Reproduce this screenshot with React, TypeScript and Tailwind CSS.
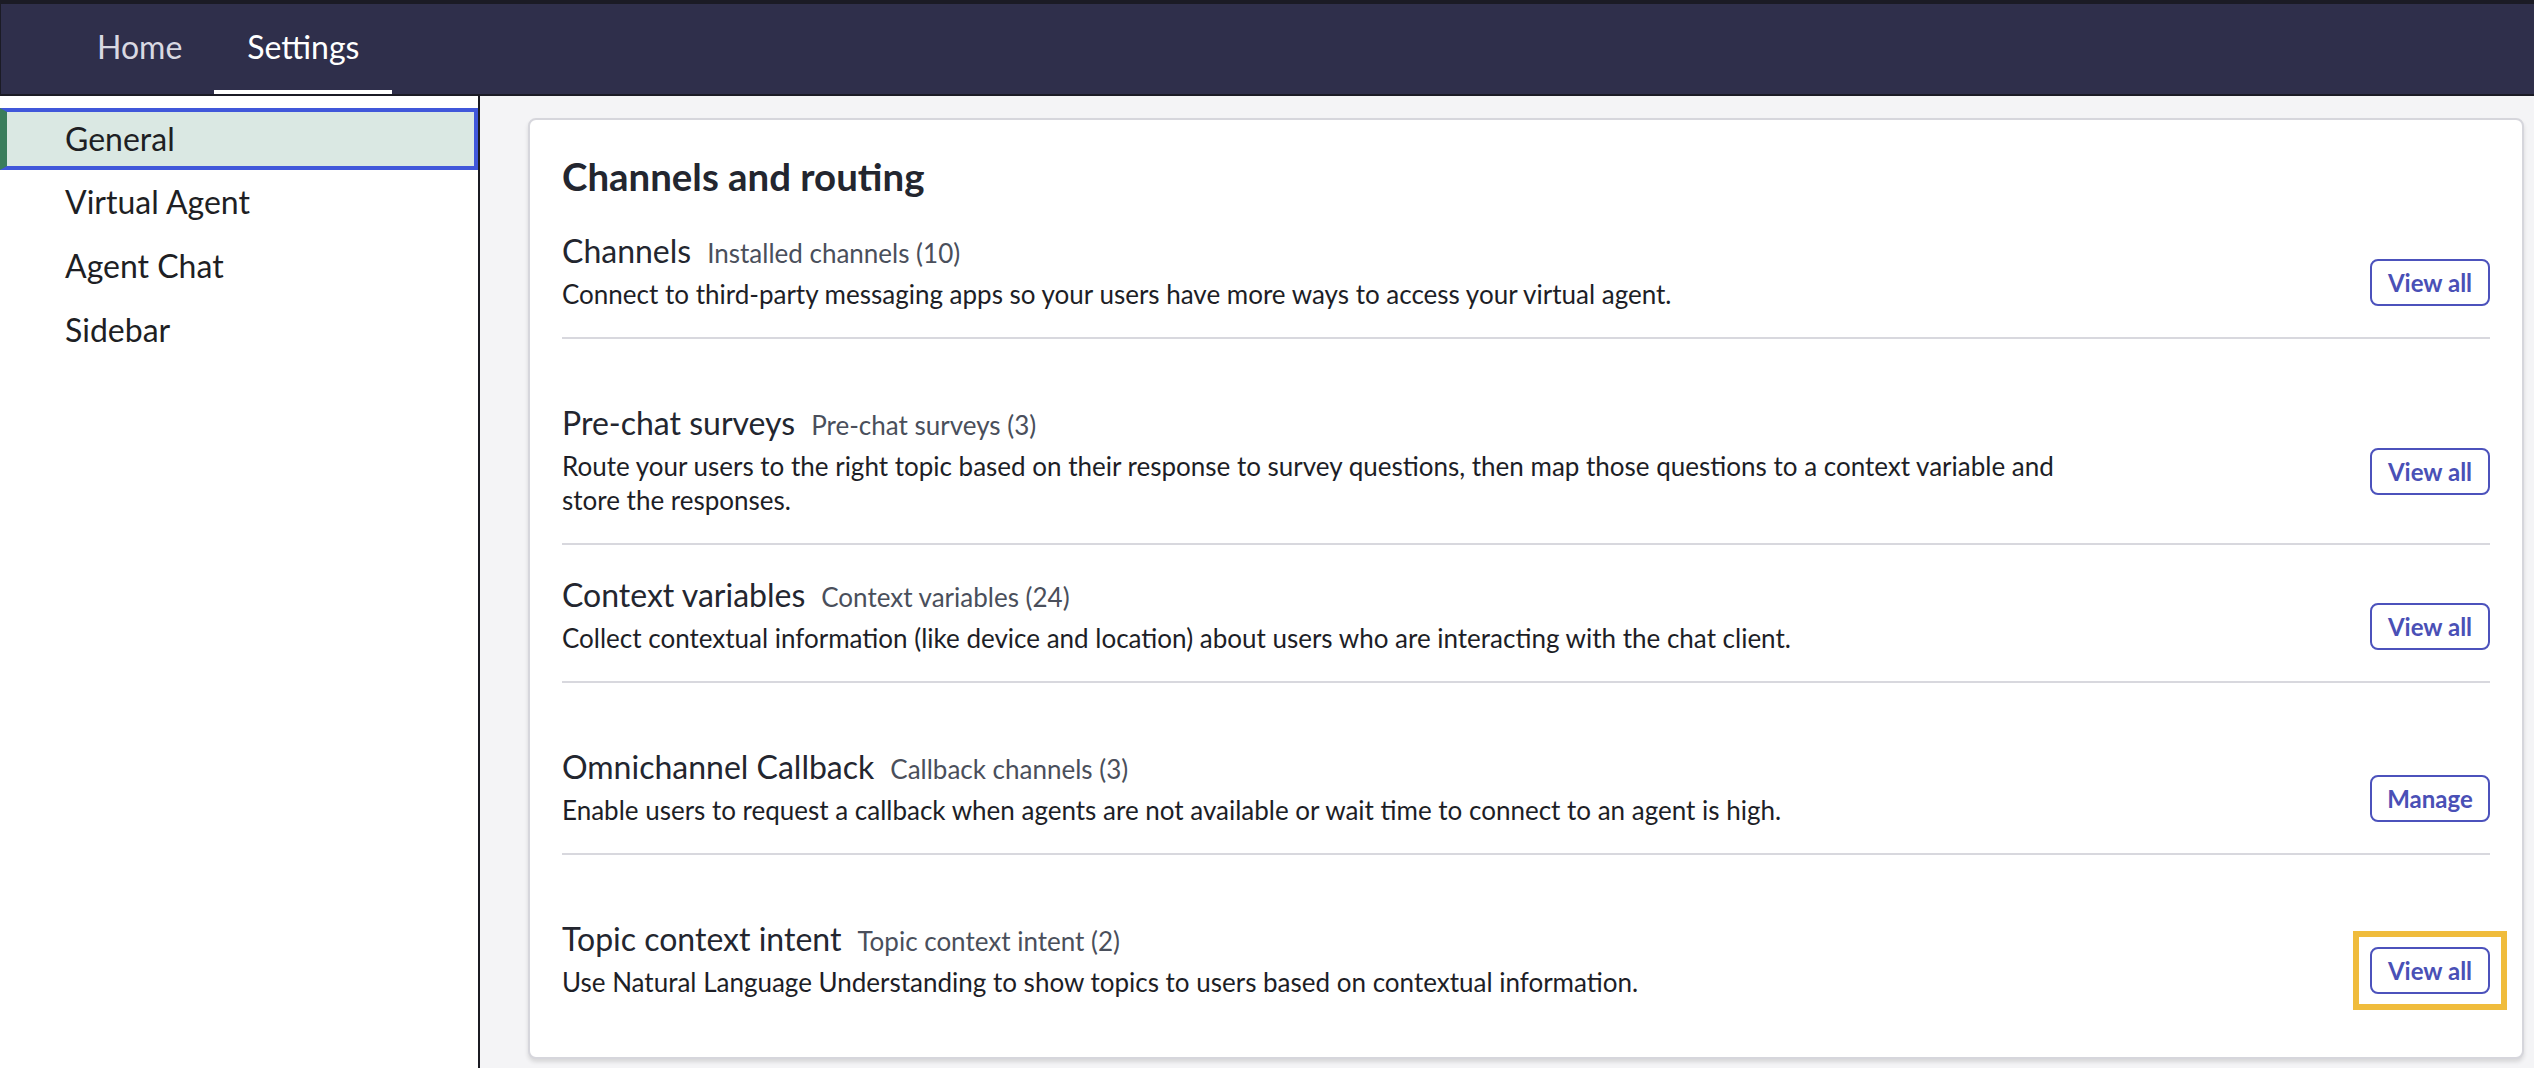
import React from "react";

type Section = {
  title: string;
  meta: string;
  desc: string;
  action: string;
  pad: string;
  focused?: boolean;
  last?: boolean;
};

const sections: Section[] = [
  {
    title: "Channels",
    meta: "Installed channels (10)",
    desc: "Connect to third-party messaging apps so your users have more ways to access your virtual agent.",
    action: "View all",
    pad: "pt-[19px]",
  },
  {
    title: "Pre-chat surveys",
    meta: "Pre-chat surveys (3)",
    desc: "Route your users to the right topic based on their response to survey questions, then map those questions to a context variable and store the responses.",
    action: "View all",
    pad: "pt-[60px]",
  },
  {
    title: "Context variables",
    meta: "Context variables (24)",
    desc: "Collect contextual information (like device and location) about users who are interacting with the chat client.",
    action: "View all",
    pad: "pt-[26px]",
  },
  {
    title: "Omnichannel Callback",
    meta: "Callback channels (3)",
    desc: "Enable users to request a callback when agents are not available or wait time to connect to an agent is high.",
    action: "Manage",
    pad: "pt-[60px]",
  },
  {
    title: "Topic context intent",
    meta: "Topic context intent (2)",
    desc: "Use Natural Language Understanding to show topics to users based on contextual information.",
    action: "View all",
    pad: "pt-[60px]",
    focused: true,
    last: true,
  },
];

const sideItems = ["General", "Virtual Agent", "Agent Chat", "Sidebar"];

function ActionButton({ label, focused }: { label: string; focused?: boolean }) {
  return (
    <div className="relative mt-[27px] shrink-0">
      <button className="h-[47px] w-[120px] rounded-[8px] border-2 border-[#4c52bc] bg-white text-[24px] font-bold text-[#4a50b6]">
        {label}
      </button>
      {/* keyboard focus frame */}
      {focused && (
        <span className="pointer-events-none absolute -inset-x-[17px] -inset-y-[16px] border-[6px] border-[#f0bc3c]" />
      )}
    </div>
  );
}

export default function App() {
  return (
    <div className="flex h-[1068px] w-full flex-col overflow-hidden bg-white font-['Lato',sans-serif]">
      <header className="flex h-[96px] shrink-0 items-stretch border-t-[4px] border-b-[2px] border-l border-[#1b1b25] bg-[#2f2f4b] pl-[64px]">
        <div className="flex items-center px-[32px] pb-[4px] text-[32px] text-[#d9d9e2]">Home</div>
        <div className="flex items-center border-b-[4px] border-white px-[33px] text-[32px] text-white">
          Settings
        </div>
      </header>

      <div className="flex min-h-0 flex-1">
        <aside className="w-[480px] shrink-0 border-r-2 border-[#1b1b22] pt-[12px]">
          {sideItems.map((item, i) =>
            i === 0 ? (
              <div
                key={item}
                className="flex h-[62px] items-center border-[4px] border-l-[7px] border-[#4057da] border-l-[#3a7d5c] bg-[#dae8e3] pl-[58px] text-[32px] text-[#1e1f24]"
              >
                {item}
              </div>
            ) : (
              <div key={item} className="flex h-[64px] items-center pl-[65px] text-[32px] text-[#1e1f24]">
                {item}
              </div>
            )
          )}
        </aside>

        <main className="flex-1 bg-[#f4f4f6] pl-[48px] pr-[10px] pt-[22px]">
          <section className="h-[941px] rounded-[8px] border-2 border-[#d6d6dc] bg-white px-[32px] pt-[24px] shadow-[0_3px_4px_rgba(0,0,0,0.12)]">
            <h1 className="text-[38.4px] font-bold leading-[64px] text-[#23262f]">Channels and routing</h1>
            {sections.map((s) => (
              <div key={s.title} className={s.pad}>
                <div className="flex items-center justify-between">
                  <div>
                    <div className="flex items-baseline gap-[16px] leading-[48px]">
                      <span className="text-[32px] text-[#23262f]">{s.title}</span>
                      <span className="text-[26px] text-[#4a4f5b]">{s.meta}</span>
                    </div>
                    <p className="max-w-[1520px] text-[26px] leading-[34px] text-[#1d1e26]">{s.desc}</p>
                  </div>
                  <ActionButton label={s.action} focused={s.focused} />
                </div>
                {!s.last && <div className="mt-[26px] h-[2px] bg-[#d8d8de]" />}
              </div>
            ))}
          </section>
        </main>
      </div>
    </div>
  );
}
